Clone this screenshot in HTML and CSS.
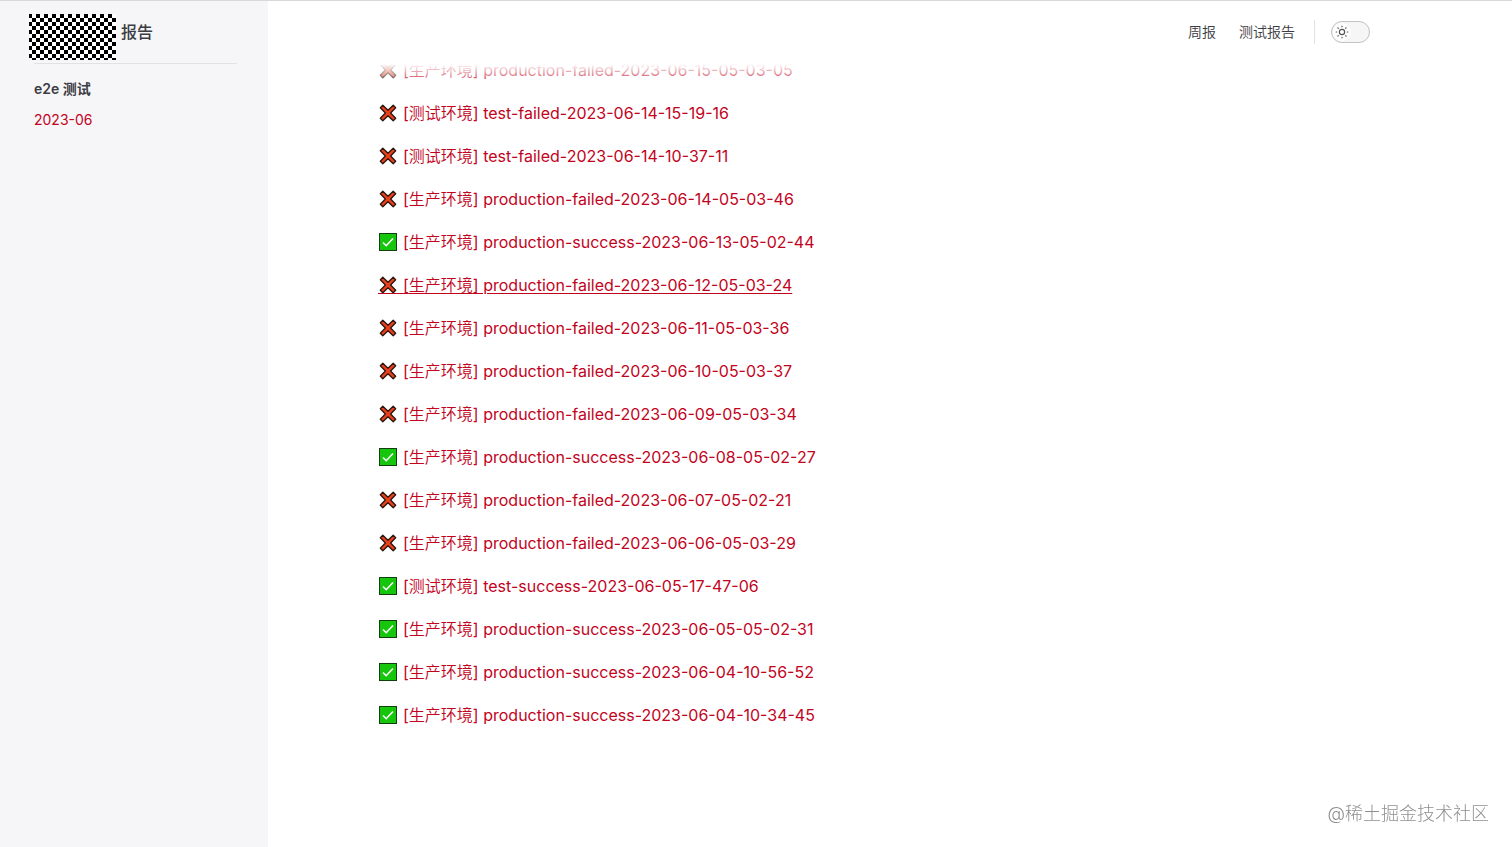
FILE: index.html
```
<!DOCTYPE html>
<html lang="zh-CN">
<head>
    <meta charset="UTF-8">
    <meta name="viewport" content="width=device-width, initial-scale=1.0">
    <title>报告</title>
    <link rel="stylesheet" href="styles.css">
</head>
<body>
    <svg class="sprite" aria-hidden="true">
        <symbol id="failed" viewBox="0 0 18 18">
            <path d="M3.8 1.3 L9 6.3 L14.2 1.3 L16.7 3.8 L11.6 9 L16.7 14.2 L14.2 16.7 L9 11.7 L3.8 16.7 L1.3 14.2 L6.4 9 L1.3 3.8 Z" fill="#e8401c" stroke="#2b1610" stroke-width="1.3" stroke-linejoin="round"/>
        </symbol>
        <symbol id="success" viewBox="0 0 18 18">
            <rect x="0.5" y="0.5" width="17" height="17" fill="#16c60c" stroke="#123f10"/>
            <path d="M4 9.5 L7.2 12.7 L14 5.5" fill="none" stroke="#fff" stroke-width="1.6"/>
        </symbol>
    </svg>

    <div class="layout">
        <aside class="sidebar">
            <a class="brand" href="#">
                <span class="logo"></span>
                <span>报告</span>
            </a>
            <nav class="menu">
                <h2>e2e 测试</h2>
                <a href="#">2023-06</a>
            </nav>
        </aside>

        <div class="page">
            <header class="navbar">
                <nav class="links">
                    <a href="#">周报</a>
                    <a href="#">测试报告</a>
                </nav>
                <button class="switch" type="button" aria-label="切换主题">
                    <span class="knob">
                        <svg viewBox="0 0 24 24" width="14" height="14" fill="none" stroke="#555" stroke-width="2" stroke-linecap="round">
                            <circle cx="12" cy="12" r="4.5"/>
                            <path d="M12 2v1M12 21v1M2 12h1M21 12h1M4.9 4.9l.7.7M18.4 18.4l.7.7M4.9 19.1l.7-.7M18.4 5.6l.7-.7"/>
                        </svg>
                    </span>
                </button>
            </header>

            <main class="content">
                <ul class="reports">
                    <li><a href="#"><svg class="icon"><use href="#failed"/></svg>&emsp;&nbsp; [<span class="env">生产环境</span>] production-failed-2023-06-15-05-03-05</a></li>
                    <li><a href="#"><svg class="icon"><use href="#failed"/></svg>&emsp;&nbsp; [<span class="env">测试环境</span>] test-failed-2023-06-14-15-19-16</a></li>
                    <li><a href="#"><svg class="icon"><use href="#failed"/></svg>&emsp;&nbsp; [<span class="env">测试环境</span>] test-failed-2023-06-14-10-37-11</a></li>
                    <li><a href="#"><svg class="icon"><use href="#failed"/></svg>&emsp;&nbsp; [<span class="env">生产环境</span>] production-failed-2023-06-14-05-03-46</a></li>
                    <li><a href="#"><svg class="icon"><use href="#success"/></svg>&emsp;&nbsp; [<span class="env">生产环境</span>] production-success-2023-06-13-05-02-44</a></li>
                    <li><a class="active" href="#"><svg class="icon"><use href="#failed"/></svg>&emsp;&nbsp; [<span class="env">生产环境</span>] production-failed-2023-06-12-05-03-24</a></li>
                    <li><a href="#"><svg class="icon"><use href="#failed"/></svg>&emsp;&nbsp; [<span class="env">生产环境</span>] production-failed-2023-06-11-05-03-36</a></li>
                    <li><a href="#"><svg class="icon"><use href="#failed"/></svg>&emsp;&nbsp; [<span class="env">生产环境</span>] production-failed-2023-06-10-05-03-37</a></li>
                    <li><a href="#"><svg class="icon"><use href="#failed"/></svg>&emsp;&nbsp; [<span class="env">生产环境</span>] production-failed-2023-06-09-05-03-34</a></li>
                    <li><a href="#"><svg class="icon"><use href="#success"/></svg>&emsp;&nbsp; [<span class="env">生产环境</span>] production-success-2023-06-08-05-02-27</a></li>
                    <li><a href="#"><svg class="icon"><use href="#failed"/></svg>&emsp;&nbsp; [<span class="env">生产环境</span>] production-failed-2023-06-07-05-02-21</a></li>
                    <li><a href="#"><svg class="icon"><use href="#failed"/></svg>&emsp;&nbsp; [<span class="env">生产环境</span>] production-failed-2023-06-06-05-03-29</a></li>
                    <li><a href="#"><svg class="icon"><use href="#success"/></svg>&emsp;&nbsp; [<span class="env">测试环境</span>] test-success-2023-06-05-17-47-06</a></li>
                    <li><a href="#"><svg class="icon"><use href="#success"/></svg>&emsp;&nbsp; [<span class="env">生产环境</span>] production-success-2023-06-05-05-02-31</a></li>
                    <li><a href="#"><svg class="icon"><use href="#success"/></svg>&emsp;&nbsp; [<span class="env">生产环境</span>] production-success-2023-06-04-10-56-52</a></li>
                    <li><a href="#"><svg class="icon"><use href="#success"/></svg>&emsp;&nbsp; [<span class="env">生产环境</span>] production-success-2023-06-04-10-34-45</a></li>
                </ul>
            </main>
        </div>
    </div>

    <div class="watermark">@稀土掘金技术社区</div>
</body>
</html>
```

FILE: styles.css
```
* {
    box-sizing: border-box;
}
body {
    margin: 0;
    font-family: Inter, "Noto Sans CJK SC", sans-serif;
    font-size: 16px;
    color: #3c3c43;
    background-color: #fff;
}
a {
    color: inherit;
    text-decoration: none;
}
.sprite {
    display: none;
}
.layout {
    display: flex;
    min-height: 100vh;
    border-top: 1px solid #d8d8da;
}

/* sidebar */
.sidebar {
    width: 268px;
    flex-shrink: 0;
    padding: 0 31px 0 34px;
    background-color: #f6f6f9;
}
.brand {
    display: flex;
    align-items: center;
    gap: 5px;
    height: 63px;
    border-bottom: 1px solid #e2e2e3;
    font-weight: 500;
    line-height: 24px;
}
.logo {
    width: 87px;
    height: 46px;
    margin: 9px 0 0 -5px;
    background: repeating-conic-gradient(#fff 0 25%, #000 0 50%) -1px 0 / 8px 8px;
}
.menu {
    padding-top: 14px;
    font-size: 14px;
    line-height: 22px;
}
.menu h2 {
    margin: 0 0 9px;
    font-size: 14px;
    font-weight: 600;
}
.menu a {
    display: block;
    color: #c2031d;
}

/* top bar */
.page {
    flex: 1;
    min-width: 0;
}
.navbar {
    position: relative;
    display: flex;
    align-items: center;
    justify-content: flex-end;
    height: 63px;
    padding: 0 142px 2px 0;
    background-color: #fff;
}
.navbar::after {
    content: "";
    position: absolute;
    top: 100%;
    left: 0;
    right: 0;
    height: 22px;
    background: linear-gradient(#fff, rgba(255, 255, 255, 0));
}
.links {
    display: flex;
    gap: 23px;
    padding-right: 19px;
    border-right: 1px solid #e2e2e3;
    font-size: 14px;
    font-weight: 350;
    line-height: 24px;
}
.switch {
    width: 39px;
    height: 22px;
    margin-left: 16px;
    padding: 1px;
    border: 1px solid #c2c2c4;
    border-radius: 11px;
    background-color: #f6f6f7;
    cursor: pointer;
}
.knob {
    display: flex;
    align-items: center;
    justify-content: center;
    width: 18px;
    height: 18px;
    border-radius: 50%;
    background-color: #fff;
}

/* report list */
.content {
    padding: 0 32px 64px 110px;
}
.reports {
    display: flex;
    flex-direction: column;
    gap: 16px;
    margin: -7px 0 0;
    padding: 0;
    list-style: none;
    line-height: 27px;
}
.reports li {
    height: 27px;
}
.reports a {
    color: #c2031d;
}
.reports a:hover,
.reports a.active {
    text-decoration: underline;
    text-underline-offset: 2px;
}
.env {
    font-weight: 350;
}
/* sits over the leading spaces so the link underline runs below it */
.icon {
    width: 18px;
    height: 18px;
    margin: 0 -19px 0 1px;
    vertical-align: -3px;
}

.watermark {
    position: fixed;
    right: 23px;
    bottom: 20px;
    font-size: 18px;
    font-weight: 300;
    line-height: 26px;
    color: #8f8f8f;
}
```
